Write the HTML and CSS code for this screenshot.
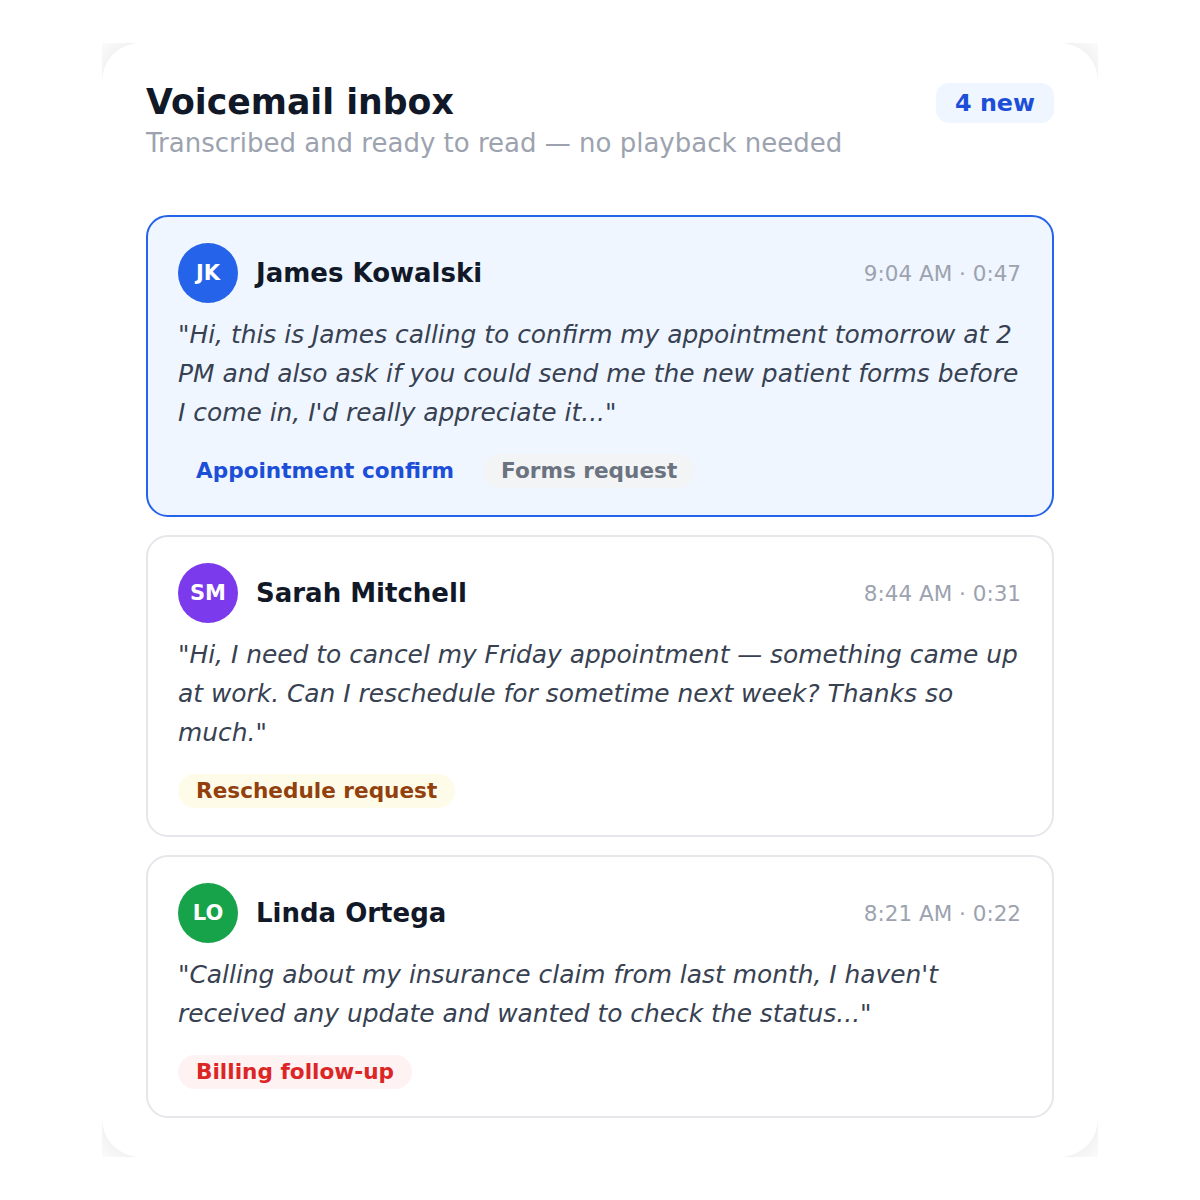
FILE: index.html
```html
<!DOCTYPE html>
<html>
<head>
  <title>Voicemail inbox</title>
  <link rel="stylesheet" href="styles.css">
</head>
<body>
  <div class="frame">
    <div class="inbox">

      <!-- Header -->
      <div class="inbox-header">
        <div>
          <h1>Voicemail inbox</h1>
          <div class="subtitle">Transcribed and ready to read — no playback needed</div>
        </div>
        <span class="badge-new">4 new</span>
      </div>

      <!-- Messages -->
      <div class="message-list">
        <div class="message unread">
          <div class="message-head">
            <span class="avatar avatar-blue">JK</span>
            <span class="caller">James Kowalski</span>
            <span class="meta">9:04 AM · 0:47</span>
          </div>
          <p class="transcript">"Hi, this is James calling to confirm my appointment tomorrow at 2 PM and also ask if you could send me the new patient forms before I come in, I'd really appreciate it..."</p>
          <div class="tags">
            <span class="tag tag-blue">Appointment confirm</span>
            <span class="tag tag-gray">Forms request</span>
          </div>
        </div>

        <div class="message">
          <div class="message-head">
            <span class="avatar avatar-purple">SM</span>
            <span class="caller">Sarah Mitchell</span>
            <span class="meta">8:44 AM · 0:31</span>
          </div>
          <p class="transcript">"Hi, I need to cancel my Friday appointment — something came up at work. Can I reschedule for sometime next week? Thanks so much."</p>
          <div class="tags">
            <span class="tag tag-yellow">Reschedule request</span>
          </div>
        </div>

        <div class="message">
          <div class="message-head">
            <span class="avatar avatar-green">LO</span>
            <span class="caller">Linda Ortega</span>
            <span class="meta">8:21 AM · 0:22</span>
          </div>
          <p class="transcript">"Calling about my insurance claim from last month, I haven't received any update and wanted to check the status..."</p>
          <div class="tags">
            <span class="tag tag-red">Billing follow-up</span>
          </div>
        </div>
      </div>

    </div>
  </div>
</body>
</html>
```

FILE: styles.css
```css
body {
  margin: 0;
  padding: 43px 102px;
  background-color: #fff;
  font-family: 'DejaVu Sans', sans-serif;
  color: #111827;
}

.frame {
  overflow: hidden;
}

.inbox {
  background-color: #fff;
  border-radius: 38px;
  padding: 40px 44px 39px;
  box-shadow: 0 0 40px rgba(0, 0, 0, 0.12);
}

.inbox-header {
  display: flex;
  justify-content: space-between;
  align-items: flex-start;
}

h1 {
  margin: 0;
  font-size: 34.7px;
  line-height: 38px;
  font-weight: bold;
  color: #111827;
}

.subtitle {
  margin-top: 6px;
  font-size: 26px;
  line-height: 32px;
  color: #9ca3af;
}

.badge-new {
  background-color: #eff6ff;
  color: #1d4ed8;
  font-weight: bold;
  font-size: 23.8px;
  line-height: 40px;
  padding: 0 19px;
  border-radius: 13px;
}

.message-list {
  margin-top: 56px;
  display: flex;
  flex-direction: column;
  gap: 18px;
}

.message {
  border: 2px solid #e5e7eb;
  border-radius: 22px;
  padding: 26px 31px 27px 30px;
  background-color: #fff;
}

.message.unread {
  border-color: #2563eb;
  background-color: #eff6ff;
}

.message-head {
  display: flex;
  align-items: center;
}

.avatar {
  width: 60px;
  height: 60px;
  border-radius: 50%;
  color: #fff;
  font-weight: bold;
  font-size: 21px;
  display: flex;
  justify-content: center;
  align-items: center;
  flex-shrink: 0;
}

.avatar-blue { background-color: #2563eb; }
.avatar-purple { background-color: #7c3aed; }
.avatar-green { background-color: #16a34a; }

.caller {
  margin-left: 18px;
  font-size: 26px;
  font-weight: bold;
  color: #111827;
  flex: 1;
}

.meta {
  font-size: 21.5px;
  color: #9ca3af;
}

.transcript {
  margin: 12px 0 0;
  font-size: 24.9px;
  line-height: 39px;
  font-style: italic;
  color: #374151;
}

.tags {
  display: flex;
  gap: 11px;
  margin-top: 22px;
}

.tag {
  font-size: 21.6px;
  font-weight: bold;
  line-height: 34px;
  padding: 0 18px;
  border-radius: 17px;
}

.tag-blue { background-color: #eff6ff; color: #1d4ed8; }
.tag-gray { background-color: #f3f4f6; color: #6b7280; }
.tag-yellow { background-color: #fefce8; color: #92400e; }
.tag-red { background-color: #fef2f2; color: #dc2626; }
```
